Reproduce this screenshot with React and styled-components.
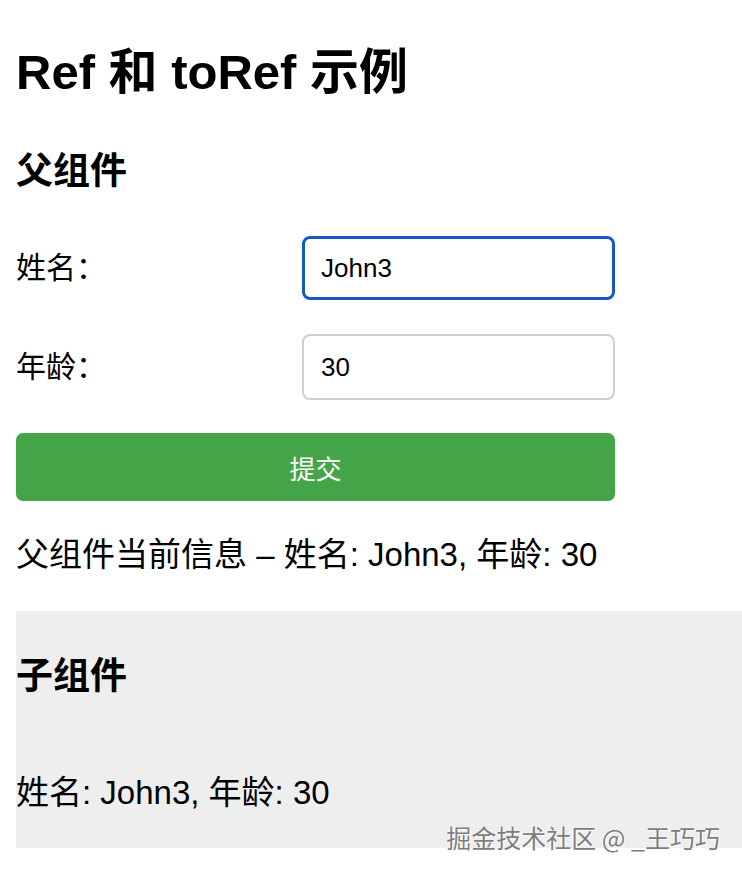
import styled, { createGlobalStyle } from 'styled-components';

let GlobalStyle = createGlobalStyle`
  body {
    margin: 0;
    background: #fff;
    color: #000;
    font-family: "Liberation Sans", "Noto Sans CJK SC", sans-serif;
  }
`;

let Page = styled.div`
  position: relative;
  padding-left: 16px;
  padding-bottom: 26px;
`;

let Title = styled.h1`
  margin: 44px 0 0;
  font-size: 49px;
  line-height: 56px;
  font-weight: 700;
`;

let SectionTitle = styled.h2`
  margin: ${(p) => p.$top}px 0 0;
  padding-top: ${(p) => p.$pad || 0}px;
  font-size: 37px;
  line-height: 44px;
  font-weight: 700;
`;

let Form = styled.div`
  width: 599px;
  display: flex;
  flex-direction: column;
`;

let Row = styled.div`
  display: flex;
  align-items: center;
  margin-top: ${(p) => p.$top}px;
`;

let Label = styled.label`
  flex: 1;
  font-size: 30px;
  line-height: 40px;
`;

let Input = styled.input`
  box-sizing: border-box;
  width: 313px;
  height: ${(p) => (p.$focused ? 64 : 66)}px;
  padding: 0 0 0 ${(p) => (p.$focused ? 16 : 17)}px;
  border: ${(p) => (p.$focused ? '3px solid #1659c0' : '2px solid #cfcfcf')};
  border-radius: 8px;
  outline: none;
  font-family: "Liberation Sans", sans-serif;
  font-size: 26px;
  color: #000;
  caret-color: #000;
  background: #fff;
`;

let SubmitButton = styled.button`
  margin-top: 33px;
  height: 68px;
  border: none;
  border-radius: 7px;
  background: #43a547;
  color: #fff;
  font-family: "Liberation Sans", "Noto Sans CJK SC", sans-serif;
  font-size: 26px;
  cursor: pointer;
`;

let Text = styled.p`
  margin: ${(p) => p.$top}px 0 0;
  font-size: 33px;
  line-height: 40px;
`;

let ChildBox = styled.div`
  margin-top: 36px;
  padding: 0 0 35px;
  background: #eeeeee;
`;

let Watermark = styled.div`
  position: absolute;
  right: 22px;
  bottom: 22px;
  font-family: "Noto Sans CJK SC", "Liberation Sans", sans-serif;
  font-size: 25px;
  line-height: 30px;
  color: #7d7d7d;
  text-shadow: 1px 1px 0 #fff, -1px 0 0 #fff;
`;

function App() {
  const name = 'John3';
  const age = 30;

  return (
    <>
      <GlobalStyle />
      <Page>
        <Title>Ref 和 toRef 示例</Title>
        <SectionTitle $top={50}>父组件</SectionTitle>
        <Form>
          <Row $top={42}>
            <Label>姓名：</Label>
            <Input $focused defaultValue={name} autoFocus />
          </Row>
          <Row $top={34}>
            <Label>年龄：</Label>
            <Input defaultValue={age} />
          </Row>
          <SubmitButton>提交</SubmitButton>
        </Form>
        <Text $top={34}>
          父组件当前信息 – 姓名: {name}, 年龄: {age}
        </Text>
        <ChildBox>
          <SectionTitle $top={0} $pad={44}>子组件</SectionTitle>
          <Text $top={74}>
            姓名: {name}, 年龄: {age}
          </Text>
        </ChildBox>
        <Watermark>掘金技术社区 @ _王巧巧</Watermark>
      </Page>
    </>
  );
}

export default App;
